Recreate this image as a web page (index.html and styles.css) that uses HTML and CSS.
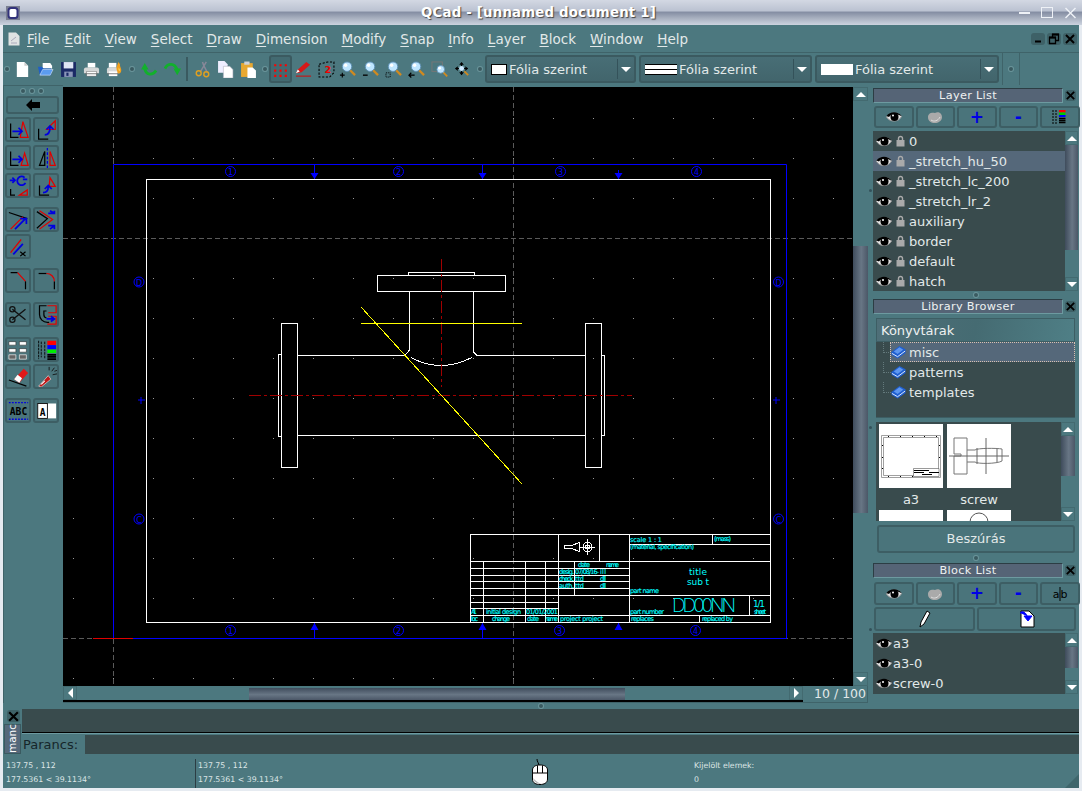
FILE: index.html
```html
<!DOCTYPE html>
<html lang="en">
<head>
<meta charset="utf-8">
<title>QCad</title>
<link rel="stylesheet" href="styles.css">
</head>
<body>
<svg class="defs" width="0" height="0">
  <symbol id="eye" viewBox="0 0 16 12">
    <path d="M0.500 6C3 1.500 12 0 15.500 5.500C13 11 4 12 0.500 6Z" fill="#e4e4e4" stroke="#999"/>
    <path d="M0.500 5C4 0 12 0 15.500 5L13 4C9 2 5 3 3 6Z" fill="#000"/>
    <circle cx="8.500" cy="6" r="4" fill="#000"/>
    <circle cx="7" cy="4.500" r="1" fill="#fff"/>
  </symbol>
  <symbol id="eyegray" viewBox="0 0 16 12">
    <path d="M1 6C1 2 5 1 8 2C11 0 15 2 15 6C15 10 11 12 8 12C4 12 1 10 1 6Z" fill="#aaa"/>
    <path d="M4 9C7 11 11 10 13 6" stroke="#ddd" fill="none"/>
  </symbol>
  <symbol id="lock" viewBox="0 0 9 12">
    <path d="M2.500 6V3.500a2 2 0 0 1 4 0V6" fill="none" stroke="#aaa" stroke-width="1.400"/>
    <rect x="0.500" y="5" width="8" height="6.500" fill="#aaa"/>
  </symbol>
  <symbol id="book" viewBox="0 0 16 14">
    <path d="M0.500 7L9 0.500L15.500 4V8L7 14L0.500 10Z" fill="#1f5fd0"/>
    <path d="M3 6.500L9 2L13 4.500L7 9Z" fill="#5f97ee"/>
    <path d="M1 8.500L7 12L15 6" stroke="#fff" fill="none" stroke-width="0.900"/>
  </symbol>
  <symbol id="lens" viewBox="0 0 16 16">
    <path d="M9 9L15 15" stroke="#d08a20" stroke-width="2.400"/>
    <circle cx="6.500" cy="6" r="5" fill="#bfe6ff" stroke="#5d8fb5"/>
    <circle cx="5" cy="4.500" r="1.800" fill="#fff"/>
  </symbol>
  <symbol id="scissors" viewBox="0 0 24 24">
    <path d="M5 6L20 18M5 18L20 6" stroke="#111" stroke-width="1.600"/>
    <circle cx="5" cy="6" r="3" fill="none" stroke="#111" stroke-width="1.400"/>
    <circle cx="5" cy="18" r="3" fill="none" stroke="#111" stroke-width="1.400"/>
  </symbol>
</svg>

<div class="app">
  <header class="titlebar">
    <svg class="app-icon" viewBox="0 0 14 14">
      <rect x="0" y="0" width="14" height="14" fill="#7a7f92"/>
      <rect x="2.500" y="2" width="9" height="10" rx="2.500" fill="#fff" stroke="#32327a" stroke-width="2"/>
    </svg>
    <span class="title-text">QCad - [unnamed document 1]</span>
    <div class="wm-buttons">
      <span class="wm wm-min"></span>
      <span class="wm wm-max"></span>
      <svg class="wm-close" viewBox="0 0 12 12"><path d="M1 1L11 11M11 1L1 11" stroke="#eef1f6" stroke-width="1.500"/></svg>
    </div>
  </header>

  <div class="frame">
    <nav class="menubar">
      <svg class="doc-icon" viewBox="0 0 12 14">
        <path d="M0.500 0.500H8L11.500 4V13.500H0.500Z" fill="#dfe3e3"/>
        <path d="M3 9L8 5M3 11H9" stroke="#aab" fill="none"/>
      </svg>
      <a class="menu menu-first"><u>F</u>ile</a>
      <a class="menu"><u>E</u>dit</a>
      <a class="menu"><u>V</u>iew</a>
      <a class="menu"><u>S</u>elect</a>
      <a class="menu"><u>D</u>raw</a>
      <a class="menu"><u>D</u>imension</a>
      <a class="menu"><u>M</u>odify</a>
      <a class="menu"><u>S</u>nap</a>
      <a class="menu"><u>I</u>nfo</a>
      <a class="menu"><u>L</u>ayer</a>
      <a class="menu"><u>B</u>lock</a>
      <a class="menu"><u>W</u>indow</a>
      <a class="menu"><u>H</u>elp</a>
      <div class="mdi-buttons">
        <span class="mdi"><svg viewBox="0 0 12 12"><path d="M3 8.500H9" stroke="#000" stroke-width="2"/></svg></span>
        <span class="mdi"><svg viewBox="0 0 12 12"><path d="M1.500 4.500H7.500V10.500H1.500ZM4.500 4.500V1.500H10.500V7.500H7.500" fill="none" stroke="#000" stroke-width="1.300"/><path d="M1 4.500H8M4 1.500H11" stroke="#000" stroke-width="2"/></svg></span>
        <span class="mdi"><svg viewBox="0 0 12 12"><path d="M2 2L10 10M10 2L2 10" stroke="#000" stroke-width="2"/></svg></span>
      </div>
    </nav>

    <div class="toolbar">
      <div class="handle handle-first"></div>
      <div class="tgroup">
        <span class="tbtn"><svg viewBox="0 0 16 18"><path d="M2 1H10L14 5V17H2Z" fill="#fff"/><path d="M10 1V5H14" fill="#ccc"/></svg></span>
        <span class="tbtn"><svg viewBox="0 0 18 18"><path d="M6 2H14L16 5V8H6Z" fill="#fff"/><path d="M1 6H5L7 8H15V15H3Z" fill="#1f5fc8"/><path d="M3 15L6 9H17L14 15Z" fill="#5b9cf0" stroke="#fff" stroke-width="0.500"/></svg></span>
        <span class="tbtn"><svg viewBox="0 0 16 16"><rect x="1" y="1" width="14" height="14" fill="#1b2a66"/><rect x="3.500" y="1" width="9" height="6" fill="#dfe6f5"/><rect x="4" y="10" width="8" height="5" fill="#8a96b8"/><rect x="6" y="11" width="2" height="3" fill="#1b2a66"/></svg></span>
        <span class="tbtn"><svg viewBox="0 0 18 16"><rect x="5" y="1" width="8" height="5" fill="#fff"/><path d="M1 8a2 2 0 0 1 2-2H15a2 2 0 0 1 2 2V12H1Z" fill="#d6d8d8"/><rect x="4" y="10" width="10" height="5" fill="#fff" stroke="#666" stroke-width="0.500"/><rect x="2" y="12" width="14" height="1" fill="#777"/></svg></span>
        <span class="tbtn"><svg viewBox="0 0 18 16"><rect x="3" y="1" width="8" height="5" fill="#fff"/><path d="M1 8a2 2 0 0 1 2-2H13V12H1Z" fill="#d6d8d8"/><rect x="3" y="10" width="9" height="5" fill="#fff"/><rect x="1" y="12" width="12" height="1" fill="#777"/><path d="M13 0C12 4 10 6 12 10C12 13 15 13 16 10C17 7 14 5 15 2C14 2 14 1 13 0Z" fill="#f0a020"/><path d="M13.500 6C13 8 13.500 10 14.500 9.500C15 8 14 7 13.500 6Z" fill="#ffe060"/></svg></span>
      </div>
      <div class="handle"></div>
      <div class="tgroup">
        <span class="tbtn"><svg viewBox="0 0 18 16"><path d="M4 7C5 14 12 15 16 9" fill="none" stroke="#12b02c" stroke-width="3"/><path d="M0 8L4 1L8 8Z" fill="#12b02c"/></svg></span>
        <span class="tbtn"><svg viewBox="0 0 18 16"><path d="M1 7C4 1 11 1 14 8" fill="none" stroke="#12b02c" stroke-width="3"/><path d="M10 7H18L14 14Z" fill="#12b02c"/></svg></span>
      </div>
      <div class="tsep"></div>
      <div class="tgroup">
        <span class="tbtn"><svg viewBox="0 0 16 18"><path d="M12 1L6 11M8 1L9 4L13 12" stroke="#889" stroke-width="1.600" fill="none"/><circle cx="4" cy="13" r="2.600" fill="none" stroke="#e0a020" stroke-width="1.500"/><circle cx="12" cy="14" r="2.600" fill="none" stroke="#e0a020" stroke-width="1.500"/></svg></span>
        <span class="tbtn"><svg viewBox="0 0 16 16"><path d="M1 0H7L10 3V11H1Z" fill="#eef"/><path d="M6 5H12L15 8V16H6Z" fill="#fff" stroke="#aab" stroke-width="0.500"/></svg></span>
        <span class="tbtn"><svg viewBox="0 0 16 16"><rect x="1" y="2" width="11" height="13" fill="#e8a830"/><rect x="4" y="0.500" width="5" height="3" fill="#cfd2d8"/><path d="M7 6H12L15 9V16H7Z" fill="#fff"/></svg></span>
      </div>
      <div class="handle handle-sm"></div>
      <div class="tgroup">
        <span class="tbtn tbtn-on"><svg viewBox="0 0 16 16"><path d="M2 3h2v2H2zM7 3h2v2H7zM12 3h2v2h-2zM2 8h2v2H2zM7 8h2v2H7zM12 8h2v2h-2zM2 13h2v2H2zM7 13h2v2H7zM12 13h2v2h-2z" fill="#f00"/></svg></span>
        <span class="tbtn"><svg viewBox="0 0 18 16"><path d="M1 12L3 8L12 0L16 3L7 11Z" fill="#d81818"/><path d="M1 12L3 8L5 10Z" fill="#fff"/><path d="M1 15H17" stroke="#d00" stroke-width="1"/></svg></span>
        <span class="tbtn"><svg viewBox="0 0 16 16"><path d="M1 3L9 1H15V11L11 15H1Z" fill="none" stroke="#000" stroke-dasharray="2 1.500"/><text class="ref-num" x="6" y="11">2</text></svg></span>
        <span class="tbtn tbtn-tight"><svg viewBox="0 0 18 18"><use href="#lens" x="2" y="0" width="16" height="16"/><path d="M1 15H6M3.500 12.500V17.500" stroke="#000" stroke-width="1.200"/></svg></span>
        <span class="tbtn"><svg viewBox="0 0 18 18"><use href="#lens" x="2" y="0" width="16" height="16"/><path d="M1 15H6" stroke="#000" stroke-width="1.400"/></svg></span>
        <span class="tbtn"><svg viewBox="0 0 18 18"><use href="#lens" x="2" y="0" width="16" height="16"/><rect x="1" y="12.500" width="4.500" height="4.500" fill="none" stroke="#000" stroke-dasharray="1 1"/></svg></span>
        <span class="tbtn"><svg viewBox="0 0 18 18"><use href="#lens" x="2" y="0" width="16" height="16"/><path d="M7 15H1M3.500 12.500L1 15L3.500 17.500" fill="none" stroke="#000" stroke-width="1.300"/></svg></span>
        <span class="tbtn"><svg viewBox="0 0 18 18"><rect x="1" y="1" width="11" height="10" fill="none" stroke="#777"/><use href="#lens" x="5" y="4" width="13" height="13"/></svg></span>
        <span class="tbtn"><svg viewBox="0 0 18 18"><path d="M8 1L5.500 4H10.500ZM8 15L5.500 12H10.500ZM1 8L4 5.500V10.500ZM15 8L12 5.500V10.500Z" fill="#000"/><path d="M8 2V14M2 8H14" stroke="#000" stroke-width="1.200"/><circle cx="8" cy="8" r="2.600" fill="#cfeaff"/><path d="M11 11L15 15" stroke="#d08a20" stroke-width="2"/></svg></span>
      </div>
      <div class="handle handle-combo"></div>
      <div class="combo combo-a">
        <span class="swatch swatch-box"></span><span class="combo-text">Fólia szerint</span>
        <span class="combo-arrow"></span>
      </div>
      <div class="combo combo-b">
        <span class="swatch swatch-line"></span><span class="combo-text">Fólia szerint</span>
        <span class="combo-arrow"></span>
      </div>
      <div class="combo combo-c">
        <span class="swatch swatch-plain"></span><span class="combo-text">Fólia szerint</span>
        <span class="combo-arrow"></span>
      </div>
      <div class="tool-end"><div class="handle"></div></div>
    </div>

    <div class="main">
      <aside class="sidetools">
        <div class="grip-row"><i class="dot"></i><i class="dot"></i><i class="dot"></i></div>
        <span class="sbtn sbtn-wide"><svg class="back" viewBox="0 0 14 12"><path d="M0 6L6 0V3H14V9H6V12Z" fill="#000"/></svg></span>
        <div class="sgrid">
          <span class="sbtn"><svg viewBox="0 0 24 24"><path d="M3 5V21H12" class="ik"/><path d="M17 3L23 21H14Z" class="ir"/><path d="M5 14H15M12 10L16 14L12 18" class="ib"/></svg></span>
          <span class="sbtn"><svg viewBox="0 0 24 24"><path d="M3 11V23H14" class="ik"/><path d="M22 2V12H12Z" class="ir"/><path d="M10 18C14 18 16 15 16 9M12 12L16 8L20 12" class="ib"/></svg></span>
          <span class="sbtn"><svg viewBox="0 0 24 24"><path d="M3 5V21H12" class="ik"/><path d="M19 7L23 21H15Z" class="ir"/><path d="M5 14H15M12 10L16 14L12 18" class="ib"/></svg></span>
          <span class="sbtn"><svg viewBox="0 0 24 24"><path d="M10 5L4 21H10Z" class="ik"/><path d="M16 5L22 21H16Z" class="ir"/><path d="M13 1V24" class="ib ib-dash"/></svg></span>
          <span class="sbtn"><svg viewBox="0 0 24 24"><path d="M2 6H8M5 3L8 6L5 9" class="ib"/><path d="M19 3A5 5 0 1 0 20 9M22 5H17" class="ib"/><path d="M3 16V23H8" class="ik"/><path d="M22 17V23H13Z" class="ir"/></svg></span>
          <span class="sbtn"><svg viewBox="0 0 24 24"><path d="M4 12V23H15" class="ik"/><path d="M16 3L22 13H15Z" class="ir"/><path d="M8 20C13 20 14 17 14 13M10 16L14 12L18 16" class="ib"/></svg></span>
        </div>
        <div class="sgrid sgrid-gap">
          <span class="sbtn"><svg viewBox="0 0 24 24"><path d="M1 4L22 11" class="ik"/><path d="M3 23L17 9" class="ir"/><path d="M8 23L20 11M14 11H21V17" class="ib"/></svg></span>
          <span class="sbtn"><svg viewBox="0 0 24 24"><path d="M1 3L13 11L1 22" class="ik"/><path d="M4 2L19 12L4 23" class="ir"/><path d="M14 5H21V2M21 5L16 2M14 19H21V23M21 19L16 23" class="ib"/></svg></span>
          <span class="sbtn"><svg viewBox="0 0 24 24"><path d="M3 19L15 4" class="ir"/><path d="M6 21L17 9" class="ib"/><path d="M14 18L20 23M20 18L14 23" class="ik"/></svg></span>
        </div>
        <div class="sgrid sgrid-gap">
          <span class="sbtn"><svg viewBox="0 0 24 24"><path d="M3 3H11" class="ik"/><path d="M11 3L20 13" class="ir"/><path d="M20 13V22" class="ik"/></svg></span>
          <span class="sbtn"><svg viewBox="0 0 24 24"><path d="M3 4H12" class="ik"/><path d="M12 4A9 9 0 0 1 21 13" class="ir"/><path d="M21 13V22" class="ik"/></svg></span>
        </div>
        <div class="sgrid sgrid-gap">
          <span class="sbtn"><svg viewBox="0 0 24 24"><use href="#scissors" width="24" height="24"/></svg></span>
          <span class="sbtn"><svg viewBox="0 0 24 24"><path d="M12 2H4V12A9 9 0 0 0 13 21H15" class="ik"/><path d="M12 8H9V12A4 4 0 0 0 12 16" class="ik"/><path d="M13 2H23V10H14M14 14H23V23H13" class="ir"/><path d="M12 17H20M17 14L21 17L17 20" class="ib"/></svg></span>
        </div>
        <div class="sgrid sgrid-gap sgrid-gap-b">
          <span class="sbtn"><svg viewBox="0 0 24 24"><path d="M1 3h8v4H1zM13 3h8v4h-8zM1 11h8v4H1zM13 11h8v4h-8z" fill="#fff" stroke="#222" stroke-width="0.600"/><path d="M1 18h8v5H1zM13 18h8v5h-8z" fill="#666" stroke="#eee" stroke-width="0.800"/></svg></span>
          <span class="sbtn"><svg viewBox="0 0 24 24"><path d="M3 2V23M6 3V21M10 3V22" class="ik ik-dash"/><rect x="13" y="2" width="10" height="5" fill="#f00"/><rect x="13" y="7" width="10" height="5" fill="#00f"/><rect x="13" y="12" width="10" height="4" fill="#0e0"/><path d="M13 18H23M13 20.500H23M13 23H23" stroke="#000" stroke-width="2"/></svg></span>
          <span class="sbtn"><svg viewBox="0 0 24 24"><path d="M1 16L21 23" class="ik"/><path d="M7 15L18 3L23 8L13 19Z" fill="#e01818"/><path d="M7 15L11 10L16 14L13 19Z" fill="#fff"/></svg></span>
          <span class="sbtn"><svg viewBox="0 0 24 24"><path d="M3 23L14 11L17 15L6 24Z" fill="#c01818" stroke="#fff" stroke-width="0.600"/><path d="M10 17L6 21" stroke="#fff" stroke-width="1.200"/><path d="M18 6L21 2M19 10L24 9M15 5L15 1M21 6L24 5" stroke="#111"/></svg></span>
        </div>
        <div class="sgrid sgrid-gap">
          <span class="sbtn"><svg viewBox="0 0 24 24"><path d="M1 3H23M1 22H23" class="ib ib-thin"/><text class="abc" x="12" y="17.500">ABC</text></svg></span>
          <span class="sbtn"><svg viewBox="0 0 24 24"><rect x="2" y="4" width="21" height="17" fill="#fff"/><rect x="2" y="4" width="11" height="17" fill="#fff" stroke="#000"/><text class="abc" x="7.500" y="18">A</text></svg></span>
        </div>
      </aside>

      <section class="center">
        <div class="canvas-row">
          <svg class="canvas" viewBox="63 87 790 599" width="790" height="599">
            <defs>
              <pattern id="griddots" x="73" y="118" width="40" height="40" patternUnits="userSpaceOnUse">
                <rect width="1" height="1" class="griddot"/>
              </pattern>
            </defs>
            <rect x="63" y="87" width="790" height="599" class="bg-black"/>
            <rect x="63" y="87" width="790" height="599" fill="url(#griddots)"/>
            <path class="meta" d="M113.500 87V686M513.500 87V686M63 238.500H853M63 638.500H853"/>
            <g class="blue">
              <path d="M113.500 164.500H786.500V638.500H113.500Z"/>
              <path d="M314.500 164V179M482.500 164V179M314.500 622V638M482.500 622V638M618.500 170V179M618.500 622V630"/>
              <path class="blue-fill" d="M310.500 173H318.500L314.500 179ZM478.500 173H486.500L482.500 179ZM614.500 173H622.500L618.500 179ZM310.500 630H318.500L314.500 623ZM478.500 630H486.500L482.500 623ZM614.500 630H622.500L618.500 623Z"/>
              <path d="M138 400H145M773 400H780M141 397V404M776 397V404"/>
              <circle cx="230.500" cy="171.500" r="5"/><circle cx="398.500" cy="171.500" r="5"/><circle cx="560.500" cy="171.500" r="5"/><circle cx="696.500" cy="171.500" r="5"/>
              <circle cx="230.500" cy="630.500" r="5"/><circle cx="398.500" cy="630.500" r="5"/><circle cx="559.500" cy="630.500" r="5"/><circle cx="695.500" cy="630.500" r="5"/>
              <circle cx="139" cy="282" r="5"/><circle cx="139" cy="519" r="5"/><circle cx="778.500" cy="282" r="5"/><circle cx="778.500" cy="519" r="5"/>
            </g>
            <path class="red-zero" d="M93 638.500H133"/>
            <g class="blue-num">
              <text x="230.500" y="175">1</text><text x="398.500" y="175">2</text><text x="560.500" y="175">3</text><text x="696.500" y="175">4</text>
              <text x="230.500" y="634">1</text><text x="398.500" y="634">2</text><text x="559.500" y="634">3</text><text x="695.500" y="634">4</text>
              <text x="139" y="286">D</text><text x="139" y="523">C</text><text x="778.500" y="286">D</text><text x="778.500" y="523">C</text>
            </g>
            <g class="white">
              <rect x="146.500" y="179.500" width="624" height="443"/>
              <path d="M281.500 323.500H297.500V467.500H281.500ZM585.500 323.500H601.500V467.500H585.500Z"/>
              <path d="M298 355.500H405M298 435.500H585M477 355.500H585M281 354.500H278.500V436.500H281M602 355.500H604.500V435.500H602"/>
              <path d="M377.500 275.500H505.500V291.500H377.500Z"/>
              <path d="M408 275V273L409.500 272.500H474L474.500 275M409.500 292V350L405 355.500M473.500 292V352L477 355.500"/>
              <path d="M411 357.500C420 362 428 365.500 441 365.500C454 365.500 462 362 472 357.500"/>
            </g>
            <path class="red" d="M441.500 259V387"/>
            <path class="red" d="M249 395.500H632"/>
            <path class="yellow" d="M361 323.500H522"/>
            <path class="yellow" d="M361 307L522 484"/>
            <g class="white">
              <path d="M470.500 534.500H770.500V622.500H470.500Z"/>
              <path d="M558.500 534.500V622M599.500 534.500V561M629.500 534.500V622M470.500 561.500H770.500M629.500 544.500H770.500M712.500 534.500V544"/>
              <path d="M470.500 568.500H629M470.500 575.500H629M470.500 581.500H629M470.500 588.500H629M470.500 595.500H770.500M470.500 602.500H558M470.500 608.500H558M470.500 615.500H770.500"/>
              <path d="M483.500 561.500V622M525.500 561.500V622M545.500 561.500V622M574.500 561.500V595M749.500 595V615M699.500 615V622"/>
              <path d="M564 545.500H572L579 542.500V551.500L572 548.500H564Z M579 547H595M587 539V555"/>
              <circle cx="587.500" cy="547" r="4.500"/><circle cx="587.500" cy="547" r="2"/>
            </g>
            <g class="cyan">
              <text x="630" y="542" textLength="32">scale  1 : 1</text>
              <text x="714" y="541" textLength="17">(mass)</text>
              <text x="630" y="549" textLength="64">(material, specification)</text>
              <text x="578" y="567" textLength="12">date</text>
              <text x="606" y="567" textLength="13">name</text>
              <text x="559" y="574" textLength="15">desig.</text>
              <text x="575" y="574" textLength="24">07/08/16-</text>
              <text x="600" y="574" textLength="6">ill</text>
              <text x="559" y="581" textLength="15">check.</text>
              <text x="575" y="581" textLength="9">ttd</text>
              <text x="600" y="581" textLength="6">dll</text>
              <text x="559" y="588" textLength="15">auth.</text>
              <text x="575" y="588" textLength="9">ttd</text>
              <text x="600" y="588" textLength="6">dll</text>
              <text x="689" y="575" class="cy-big" textLength="18">title</text>
              <text x="687" y="585" class="cy-big" textLength="22">sub t</text>
              <text x="630" y="593" textLength="29">part name</text>
              <text x="672" y="612" class="cy-huge" textLength="64">DD00NN</text>
              <text x="753" y="607" class="cy-big" textLength="12">1/1</text>
              <text x="754" y="614" textLength="12">sheet</text>
              <text x="630" y="614" textLength="34">part number</text>
              <text x="471" y="614" textLength="6">A1</text>
              <text x="486" y="614" textLength="35">initial design</text>
              <text x="526" y="614" textLength="32">01/01/2001</text>
              <text x="471" y="621" textLength="7">loc</text>
              <text x="492" y="621" textLength="18">change</text>
              <text x="527" y="621" textLength="12">date</text>
              <text x="545" y="621" textLength="13">name</text>
              <text x="560" y="621" textLength="43">project  project</text>
              <text x="631" y="621" textLength="23">replaces</text>
              <text x="702" y="621" textLength="31">replaced by</text>
            </g>
          </svg>
          <div class="vscroll vscroll-main">
            <span class="sb-btn"><i class="arr-up"></i></span>
            <span class="sb-space sb-s145"></span>
            <span class="sb-thumb sb-t267"></span>
            <span class="sb-space sb-fill"></span>
            <span class="sb-btn"><i class="arr-down"></i></span>
          </div>
        </div>
        <div class="hscroll-row">
          <div class="hscroll">
            <span class="hb-btn"><i class="arr-left"></i></span>
            <span class="hb-space"></span>
            <span class="hb-thumb"></span>
            <span class="hb-fill"></span>
            <span class="hb-btn hb-btn-r"><i class="arr-right"></i></span>
          </div>
          <div class="zoombox">10 / 100</div>
        </div>
      </section>

      <div class="gutter"><i class="dot dot-s"></i><i class="dot dot-s gut-b"></i><i class="dot dot-s gut-c"></i></div>

      <aside class="dock">
        <div class="dock-title"><span class="dt-text">Layer List</span><span class="dt-close"><svg viewBox="0 0 12 12"><path d="M2 2L10 10M10 2L2 10" stroke="#000" stroke-width="2"/></svg></span></div>
        <div class="btn-row">
          <span class="dbtn"><svg class="ic16" viewBox="0 0 16 12"><use href="#eye"/></svg></span>
          <span class="dbtn"><svg class="ic16" viewBox="0 0 16 12"><use href="#eyegray"/></svg></span>
          <span class="dbtn dbtn-plus">+</span>
          <span class="dbtn dbtn-plus">-</span>
          <span class="dbtn"><svg class="ic16" viewBox="0 0 16 14"><path d="M1 0V14M4 0V14" stroke="#000" stroke-dasharray="2 1"/><rect x="7" y="0" width="6.500" height="2.500" fill="#f00"/><rect x="7" y="2.500" width="6.500" height="2.500" fill="#0c0"/><rect x="7" y="5" width="6.500" height="2" fill="#00f"/><path d="M7 8.500H13.500M7 10.500H13.500M7 12.500H13.500" stroke="#000" stroke-width="1.300"/></svg></span>
        </div>
        <div class="listbox listbox-layer">
          <ul class="rows">
            <li class="row"><svg class="eye"><use href="#eye"/></svg><svg class="lock"><use href="#lock"/></svg><span>0</span></li>
            <li class="row row-sel"><svg class="eye"><use href="#eye"/></svg><svg class="lock"><use href="#lock"/></svg><span>_stretch_hu_50</span></li>
            <li class="row"><svg class="eye"><use href="#eye"/></svg><svg class="lock"><use href="#lock"/></svg><span>_stretch_lc_200</span></li>
            <li class="row"><svg class="eye"><use href="#eye"/></svg><svg class="lock"><use href="#lock"/></svg><span>_stretch_lr_2</span></li>
            <li class="row"><svg class="eye"><use href="#eye"/></svg><svg class="lock"><use href="#lock"/></svg><span>auxiliary</span></li>
            <li class="row"><svg class="eye"><use href="#eye"/></svg><svg class="lock"><use href="#lock"/></svg><span>border</span></li>
            <li class="row"><svg class="eye"><use href="#eye"/></svg><svg class="lock"><use href="#lock"/></svg><span>default</span></li>
            <li class="row"><svg class="eye"><use href="#eye"/></svg><svg class="lock"><use href="#lock"/></svg><span>hatch</span></li>
          </ul>
          <div class="vscroll">
            <span class="sb-btn"><i class="arr-up"></i></span>
            <span class="sb-thumb sb-t105"></span>
            <span class="sb-space sb-fill"></span>
            <span class="sb-btn"><i class="arr-down"></i></span>
          </div>
        </div>
        <div class="dock-gap"><i class="dot"></i></div>

        <div class="dock-title"><span class="dt-text">Library Browser</span><span class="dt-close"><svg viewBox="0 0 12 12"><path d="M2 2L10 10M10 2L2 10" stroke="#000" stroke-width="2"/></svg></span></div>
        <div class="tree">
          <div class="tree-head">Könyvtárak</div>
          <ul class="tree-body">
            <li class="tree-row tree-sel"><svg class="book"><use href="#book"/></svg><span>misc</span></li>
            <li class="tree-row"><svg class="book"><use href="#book"/></svg><span>patterns</span></li>
            <li class="tree-row"><svg class="book"><use href="#book"/></svg><span>templates</span></li>
          </ul>
        </div>
        <div class="preview">
          <div class="thumbs">
            <figure class="thumb">
              <svg viewBox="0 0 64 64" class="thumb-img">
                <path d="M2.500 11.500H61.500V53.500H2.500ZM4.500 13.500H59.500V51.500H4.500Z" fill="none" stroke="#888" stroke-width="0.800"/>
                <path d="M9 12.500h1M21 12.500h1M33 12.500h1M45 12.500h1M57 12.500h1M9 52.500h1M21 52.500h1M33 52.500h1M3 21.500h1M3 33.500h1M3 44.500h1M60 21.500h1M60 33.500h1" stroke="#000"/>
                <path d="M34.500 44.500H60V52.500H34.500Z" fill="#fff" stroke="#555" stroke-width="0.600"/>
                <path d="M35 46.500H50M35 48.500H45M50 48.500H60M43 50.500H53" stroke="#000" stroke-width="1.200"/>
              </svg>
              <figcaption>a3</figcaption>
            </figure>
            <figure class="thumb">
              <svg viewBox="0 0 64 64" class="thumb-img">
                <path d="M7 14H20V50H7V32H14V30H7Z M20 26H28C30 24 50 24 55 25V37C50 40 30 40 28 38H20" fill="none" stroke="#777"/>
                <path d="M2 32H62M39 14V50M30 24V40M50 25V38" stroke="#666" fill="none"/>
              </svg>
              <figcaption>screw</figcaption>
            </figure>
            <div class="thumb-cut"></div>
            <div class="thumb-cut"><svg viewBox="0 0 64 11"><circle cx="32" cy="12" r="9" fill="none" stroke="#555"/></svg></div>
          </div>
          <div class="vscroll">
            <span class="sb-btn"><i class="arr-up"></i></span>
            <span class="sb-thumb sb-t39"></span>
            <span class="sb-space sb-fill"></span>
            <span class="sb-btn"><i class="arr-down"></i></span>
          </div>
        </div>
        <div class="insert">Beszúrás</div>
        <div class="dock-gap dock-gap-b"><i class="dot"></i></div>

        <div class="dock-title"><span class="dt-text">Block List</span><span class="dt-close"><svg viewBox="0 0 12 12"><path d="M2 2L10 10M10 2L2 10" stroke="#000" stroke-width="2"/></svg></span></div>
        <div class="btn-row btn-row-block">
          <span class="dbtn"><svg class="ic16" viewBox="0 0 16 12"><use href="#eye"/></svg></span>
          <span class="dbtn"><svg class="ic16" viewBox="0 0 16 12"><use href="#eyegray"/></svg></span>
          <span class="dbtn dbtn-plus">+</span>
          <span class="dbtn dbtn-plus">-</span>
          <span class="dbtn"><svg class="ic16" viewBox="0 0 16 14"><path d="M8 0V14" stroke="#000"/><text class="ab" x="4" y="11">a</text><text class="ab" x="12" y="11">b</text></svg></span>
        </div>
        <div class="btn-row btn-row-two">
          <span class="dbtn"><svg class="ic18" viewBox="0 0 12 18"><path d="M8 1L11 3L5 14L1 17L2 12Z" fill="#fff" stroke="#000"/></svg></span>
          <span class="dbtn"><svg class="ic18" viewBox="0 0 16 18"><path d="M2 1H10L15 6V17H2Z" fill="#fff" stroke="#000"/><path d="M1 3C4 0 7 3 8 6M5 6H13L9 11Z" stroke="#00f" fill="#00f" stroke-width="1"/></svg></span>
        </div>
        <div class="listbox listbox-block">
          <ul class="rows">
            <li class="row row-b"><svg class="eye"><use href="#eye"/></svg><span>a3</span></li>
            <li class="row row-b"><svg class="eye"><use href="#eye"/></svg><span>a3-0</span></li>
            <li class="row row-b"><svg class="eye"><use href="#eye"/></svg><span>screw-0</span></li>
          </ul>
          <div class="vscroll">
            <span class="sb-btn"><i class="arr-up"></i></span>
            <span class="sb-thumb sb-t21"></span>
            <span class="sb-space sb-fill"></span>
            <span class="sb-btn"><i class="arr-down"></i></span>
          </div>
        </div>
      </aside>
    </div>

    <div class="split-row"><i class="dot"></i></div>

    <div class="command">
      <div class="cmd-side">
        <span class="cmd-close"><svg viewBox="0 0 12 12"><path d="M2 2L10 10M10 2L2 10" stroke="#000" stroke-width="2"/></svg></span>
        <span class="cmd-tab"><span>manc</span></span>
      </div>
      <div class="cmd-main">
        <div class="cmd-output"></div>
        <div class="cmd-input"><label class="cmd-label">Parancs:</label><div class="cmd-field"></div></div>
      </div>
    </div>

    <footer class="status">
      <div class="st-coord"><div>137.75 , 112</div><div>177.5361 &lt; 39.1134°</div></div>
      <div class="st-coord st-coord-2"><div>137.75 , 112</div><div>177.5361 &lt; 39.1134°</div></div>
      <div class="st-mouse">
        <svg viewBox="0 0 16 27" width="16" height="27">
          <path d="M7 8C7 5 5 4 5 1" fill="none" stroke="#000"/>
          <path d="M0.500 12C0.500 9 3 7 8 7C13 7 15.500 9 15.500 12V21C15.500 25 12 26.500 8 26.500C4 26.500 0.500 25 0.500 21Z" fill="#fff" stroke="#000"/>
          <path d="M0.500 15H15.500M5.500 7.500V15M10.500 7.500V15" stroke="#000"/>
          <path d="M1 20C2 24 5 26 9 26C5 24 3 22 1 20Z" fill="#bbb"/>
        </svg>
      </div>
      <div class="st-sel"><div>Kijelölt elemek:</div><div>0</div></div>
      <svg class="grip" viewBox="0 0 14 14"><path d="M14 0V14H0Z" fill="#3f666c"/></svg>
    </footer>
  </div>
</div>
</body>
</html>
```

FILE: styles.css
```css
* { box-sizing: border-box; }
html, body { margin: 0; padding: 0; }
body {
  width: 1082px;
  height: 791px;
  overflow: hidden;
  background: #e6ebf1;
  font-family: "DejaVu Sans", sans-serif;
  font-size: 13px;
  color: #e2e9e9;
}
ul { list-style: none; margin: 0; padding: 0; }
figure { margin: 0; }
svg { display: block; }
.defs { position: absolute; }
.app { display: flex; flex-direction: column; height: 791px; }

/* window title */
.titlebar {
  height: 25px;
  flex: none;
  display: flex;
  align-items: center;
  padding: 0 5px 0 6px;
  background: linear-gradient(#d3d8e3 0, #bcc3d2 42%, #868fa4 50%, #a4acbc 70%, #ccd3df 100%);
}
.app-icon { width: 14px; height: 14px; flex: none; }
.title-text {
  flex: 1;
  text-align: center;
  font-weight: bold;
  font-size: 13.300px;
  letter-spacing: 0.200px;
  color: #fff;
  text-shadow: 1px 1px 1px #444;
  padding-left: 38px;
}
.wm-buttons { display: flex; align-items: center; gap: 11px; flex: none; }
.wm { display: block; }
.wm-min { width: 11px; height: 2px; background: #eef1f6; }
.wm-max { width: 12px; height: 11px; border: 1px solid #eef1f6; }
.wm-close { width: 13px; height: 12px; }

.frame {
  width: 1076px;
  height: 763px;
  margin-left: 3px;
  background: #4c787f;
  display: flex;
  flex-direction: column;
  flex: none;
}

/* menu */
.menubar {
  height: 28px;
  flex: none;
  display: flex;
  align-items: center;
  padding-left: 5px;
  border-bottom: 1px solid #3f6369;
  font-size: 13.500px;
}
.doc-icon { width: 12px; height: 14px; margin-right: 7px; flex: none; }
.menu { margin-right: 14px; color: #e2e9e9; }
.menu-first { margin-right: 15px; }
.menu u { text-decoration-thickness: 1px; text-underline-offset: 2px; }
.mdi-buttons { margin-left: auto; display: flex; gap: 2px; padding-right: 2px; }
.mdi {
  width: 14px;
  height: 12px;
  display: flex;
  align-items: center;
  justify-content: center;
  background: #3e6167;
  border-radius: 3px;
}
.mdi svg { width: 12px; height: 12px; }

/* toolbar */
.toolbar {
  height: 32px;
  flex: none;
  display: flex;
  align-items: center;
}
.tgroup { display: flex; align-items: center; }
.handle {
  width: 12px;
  flex: none;
  display: flex;
  justify-content: center;
}
.handle::before {
  content: "";
  width: 4px;
  height: 4px;
  border-radius: 50%;
  background: #3a5a60;
  box-shadow: 0 0 0 1px #6a949a;
}
.handle-first { width: 8px; }
.handle-sm { width: 9px; }
.handle-combo { width: 11px; }
.tsep { width: 7px; height: 24px; flex: none; background: linear-gradient(#3a5a60, #3a5a60) 2px 0 / 2px 100% no-repeat; }
.tbtn {
  width: 23px;
  height: 28px;
  flex: none;
  display: flex;
  align-items: center;
  justify-content: center;
}
.tbtn-tight { margin-left: -2px; }
.tbtn svg { width: 17px; height: 17px; }
.tbtn-on { background: #436a71; border: 2px solid #3b5a60; border-radius: 3px; }
.ref-num { font: bold 9px "DejaVu Sans", sans-serif; fill: #e00; text-anchor: start; }
.combo {
  height: 28px;
  flex: none;
  display: flex;
  align-items: center;
  padding-left: 4px;
  background: linear-gradient(#486e76, #42656c);
  border: 2px solid #3b5a60;
  border-radius: 3px;
  margin-right: 3px;
}
.combo-a { width: 151px; }
.combo-b { width: 173px; }
.combo-c { width: 184px; }
.swatch { flex: none; display: block; background: #fff; }
.swatch-box { width: 16px; height: 11px; border: 1px solid #000; margin-right: 2px; }
.swatch-line { width: 32px; height: 11px; border-top: 1px solid #000; border-bottom: 1px solid #000; margin-right: 2px; background: linear-gradient(#fff 40%, #000 40%, #000 60%, #fff 60%); }
.swatch-plain { width: 32px; height: 11px; margin-right: 2px; }
.combo-text { flex: 1; font-size: 13px; white-space: nowrap; }
.combo-arrow {
  flex: none;
  width: 17px;
  height: 20px;
  border-left: 1px solid #34525a;
  display: flex;
  align-items: center;
  justify-content: center;
}
.combo-arrow::after {
  content: "";
  border-left: 5px solid transparent;
  border-right: 5px solid transparent;
  border-top: 5px solid #fff;
}
.tool-end {
  width: 18px;
  height: 32px;
  flex: none;
  border-left: 1px solid #3f6369;
  border-right: 1px solid #3f6369;
  display: flex;
  align-items: center;
}
.tool-end .handle { width: 16px; }

/* main */
.main { height: 618px; flex: none; display: flex; }
.sidetools {
  width: 60px;
  flex: none;
  padding: 0 0 0 1px;
  display: flex;
  flex-direction: column;
  border-top: 1px solid #3f6369;
  border-left: 1px solid #3f6369;
}
.grip-row { height: 10px; display: flex; justify-content: center; align-items: center; gap: 5px; margin-right: 4px; flex: none; }
.dot {
  display: block;
  width: 4px;
  height: 4px;
  border-radius: 50%;
  background: #3a5a60;
  box-shadow: 0 0 0 1px #6a949a;
}
.dot-s { width: 3px; height: 3px; background: #33515a; box-shadow: none; }
.sbtn {
  height: 25px;
  display: flex;
  align-items: center;
  justify-content: center;
  background: #4a747b;
  border: 2px solid #3d5e64;
  border-radius: 3px;
}
.sbtn svg { width: 21px; height: 21px; }
.sbtn-wide { height: 18px; width: 53px; flex: none; margin-left: 1px; }
.sbtn .back { width: 14px; height: 12px; }
.sgrid { display: grid; grid-template-columns: 26px 26px; column-gap: 2px; row-gap: 3px; margin-top: 3px; width: 54px; }
.sgrid-gap { margin-top: 9px; row-gap: 2px; }
.sgrid-gap-b { margin-top: 10px; }
.ik { fill: none; stroke: #000; stroke-width: 1.400; }
.ir { fill: none; stroke: #e00000; stroke-width: 1.400; }
.ib { fill: none; stroke: #0000e0; stroke-width: 2; }
.ib-dash { stroke-dasharray: 3 2; stroke-width: 1.400; }
.ib-thin { stroke-width: 1.600; stroke-dasharray: 2 1.500; }
.ik-dash { stroke-dasharray: 3 1; stroke-width: 1; }
.abc { font: bold 11px "DejaVu Sans Mono", monospace; fill: #000; text-anchor: middle; }

.center { width: 805px; flex: none; display: flex; flex-direction: column; padding-top: 2px; }
.canvas-row { display: flex; height: 599px; flex: none; }
.canvas { flex: none; width: 790px; height: 599px; }
.vscroll {
  width: 14px;
  flex: none;
  display: flex;
  flex-direction: column;
  background: #4c787f;
}
.vscroll-main { width: 15px; }
.sb-btn {
  height: 14px;
  flex: none;
  display: flex;
  align-items: center;
  justify-content: center;
  background: #4c787f;
  box-shadow: inset 0 0 0 1px #436a70;
}
.sb-space { flex: none; display: block; }
.sb-fill { flex: 1; }
.sb-s145 { height: 145px; }
.sb-thumb {
  flex: none;
  display: block;
  background: linear-gradient(90deg, #3f4c5c, #687685 55%, #4b5767);
}
.sb-t267 { height: 267px; }
.sb-t105 { height: 105px; }
.sb-t39 { height: 40px; }
.sb-t21 { height: 21px; }
.arr-up, .arr-down, .arr-left, .arr-right { display: block; width: 0; height: 0; }
.arr-up { border-left: 5px solid transparent; border-right: 5px solid transparent; border-bottom: 5px solid #fff; }
.arr-down { border-left: 5px solid transparent; border-right: 5px solid transparent; border-top: 5px solid #fff; }
.arr-left { border-top: 5px solid transparent; border-bottom: 5px solid transparent; border-right: 5px solid #fff; }
.arr-right { border-top: 5px solid transparent; border-bottom: 5px solid transparent; border-left: 5px solid #fff; }

.hscroll-row { display: flex; height: 17px; flex: none; }
.hscroll {
  width: 740px;
  height: 16px;
  flex: none;
  display: flex;
  border-bottom: 2px solid #000;
  box-shadow: 0 1px 0 #3f6369;
}
.hb-btn {
  width: 14px;
  flex: none;
  display: flex;
  align-items: center;
  justify-content: center;
  box-shadow: inset 0 0 0 1px #436a70;
}
.hb-space { width: 172px; flex: none; }
.hb-thumb { width: 376px; flex: none; margin-top: 2px; background: linear-gradient(#3f4c5c, #687685 55%, #4b5767); }
.hb-fill { flex: 1; }
.zoombox {
  width: 65px;
  flex: none;
  font-size: 12.500px;
  text-align: right;
  line-height: 16px;
  padding-right: 1px;
  border-right: 1px solid #3f6369;
  border-bottom: 1px solid #3f6369;
}

/* gutter between the drawing and the docks */
.gutter { width: 5px; flex: none; display: flex; flex-direction: column; padding: 104px 0 0 1px; }
.gut-b { margin-top: 234px; }
.gut-c { margin-top: 199px; }

/* dock */
.dock { width: 205px; flex: none; display: flex; flex-direction: column; padding-top: 3px; }
.dock-title { display: flex; height: 15px; flex: none; align-items: center; }
.dt-text {
  width: 190px;
  height: 15px;
  line-height: 14px;
  font-size: 11.300px;
  letter-spacing: 0.300px;
  text-align: center;
  background: #556476;
  border-top: 1px solid #2c3d44;
  border-left: 1px solid #2c3d44;
  border-right: 1px solid #6d9aa0;
  border-bottom: 1px solid #6d9aa0;
  color: #eef1f1;
}
.dt-close { width: 11px; height: 11px; margin-left: 2px; display: block; background: #3e6167; border-radius: 3px; }
.btn-row { display: flex; gap: 2px; padding-left: 1px; margin-top: 3px; height: 22px; flex: none; }
.btn-row-block { height: 23px; margin-top: 4px; }
.btn-row-two { margin-top: 2px; height: 24px; }
.dbtn {
  width: 39.500px;
  display: flex;
  align-items: center;
  justify-content: center;
  background: #4a747b;
  border: 2px solid #3d5e64;
  border-radius: 3px;
  flex: none;
}
.btn-row-two .dbtn { width: 101px; }
.btn-row-two .dbtn + .dbtn { width: 99px; }
.dbtn-plus { color: #0000e6; font-weight: bold; font-size: 17px; line-height: 17px; }
.ic16 { width: 16px; height: 14px; }
.ic18 { width: 16px; height: 18px; }
.ab { font: 11px "DejaVu Sans", sans-serif; fill: #000; text-anchor: middle; }

.listbox {
  display: flex;
  background: #394b4d;
  margin-top: 3px;
  flex: none;
}
.listbox-layer { height: 160px; }
.listbox-block { height: 61px; margin-top: 2px; }
.rows { flex: 1; min-width: 0; overflow: hidden; }
.row {
  height: 20px;
  display: flex;
  align-items: center;
  padding-left: 3px;
  font-size: 13px;
  white-space: nowrap;
}
.row-sel { background: #55687a; }
.eye { width: 16px; height: 13px; flex: none; }
.lock { width: 9px; height: 12px; margin-left: 4px; margin-right: 4px; flex: none; }
.row-b .eye { margin-right: 1px; }
.listbox .vscroll { width: 13px; }

.dock-gap { height: 8px; flex: none; display: flex; justify-content: center; align-items: center; }
.dock-gap-b { height: 10px; }

.tree { margin: 4px 3px 0 3px; flex: none; height: 100px; display: flex; flex-direction: column; }
.tree-head {
  height: 24px;
  flex: none;
  line-height: 24px;
  padding-left: 4px;
  font-size: 13px;
  background: linear-gradient(100deg, #4f6f78 0, #456b72 50%, #4f7f86 100%);
  border: 1px solid #3d5e64;
  color: #eef1f1;
}
.tree-body { flex: 1; background: #394b4d; border-bottom: 1px solid #3d5e64; }
.tree-row {
  height: 20px;
  display: flex;
  align-items: center;
  margin-left: 14px;
  font-size: 13px;
  position: relative;
}
.tree-row::before {
  content: "";
  position: absolute;
  left: -7px;
  top: 0;
  width: 7px;
  height: 10px;
  border-left: 1px dotted #63797c;
  border-bottom: 1px dotted #63797c;
}
.tree-sel {
  background: #55687a;
  outline: 1px dotted #d8c0b0;
  outline-offset: -1px;
}
.book { width: 15px; height: 14px; margin-left: 1px; margin-right: 3px; flex: none; }

.preview { display: flex; height: 99px; flex: none; margin: 4px 3px 0 3px; background: #394b4d; overflow: hidden; }
.thumbs { flex: 1; display: grid; grid-template-columns: 64px 64px; grid-auto-rows: min-content; column-gap: 4px; padding: 2px 0 0 3px; align-content: start; }
.thumb { text-align: center; }
.thumb-img { width: 64px; height: 64px; background: #fff; }
.thumb figcaption { height: 22px; line-height: 24px; font-size: 13px; }
.thumb-cut { width: 64px; height: 11px; background: #fff; }
.thumb-cut svg { width: 64px; height: 11px; }

.insert {
  height: 28px;
  flex: none;
  margin: 4px 3px 0 4px;
  line-height: 24px;
  text-align: center;
  font-size: 13px;
  background: #4a747b;
  border: 2px solid #3d5e64;
  border-radius: 3px;
}

.split-row { height: 6px; flex: none; display: flex; justify-content: center; align-items: center; }

/* command */
.command { height: 45px; flex: none; display: flex; }
.cmd-side { width: 19px; flex: none; display: flex; flex-direction: column; padding-left: 1px; }
.cmd-close { width: 13px; height: 12px; margin-left: 3px; margin-top: 1px; display: block; background: #3e6167; border-radius: 3px; }
.cmd-tab {
  margin-top: 2px;
  width: 17px;
  height: 30px;
  background: #55687a;
  border: 1px solid #3a5a60;
  display: flex;
  align-items: center;
  justify-content: center;
  font-size: 10.500px;
  color: #fff;
}
.cmd-tab span { writing-mode: vertical-rl; transform: rotate(180deg); line-height: 15px; }
.cmd-main { flex: 1; display: flex; flex-direction: column; }
.cmd-output { height: 24px; flex: none; background: #394b4d; border-bottom: 1px solid #000; box-shadow: 0 1px 0 #6d9aa0; }
.cmd-input { height: 19px; margin-top: 2px; flex: none; display: flex; align-items: center; }
.cmd-label { width: 63px; flex: none; color: #16262a; font-size: 13px; padding-left: 1px; }
.cmd-field { flex: 1; align-self: stretch; background: #394b4d; }

/* status */
.status { flex: 1; display: flex; position: relative; padding-top: 5px; font-size: 7.800px; color: #dce6e6; }
.st-coord { width: 192px; flex: none; line-height: 14px; padding-left: 3px; }
.st-coord-2 { width: 334px; border-left: 1px solid #2c3d44; padding-left: 2px; }
.st-mouse { width: 165px; flex: none; padding-left: 3px; margin-top: -1px; }
.st-sel { flex: 1; line-height: 14px; }
.grip { position: absolute; right: 0; bottom: 0; width: 14px; height: 14px; }

/* drawing */
.bg-black { fill: #000; }
.griddot { fill: #9a9a9a; }
.meta { fill: none; stroke: #5a5a5a; stroke-dasharray: 5 3; }
.red-zero { stroke: #e00000; stroke-width: 1; fill: none; }
.blue { fill: none; stroke: #0000ff; stroke-width: 1; }
.blue .blue-fill { fill: #0000ff; stroke: none; }
.blue-num text { font: 8px "DejaVu Sans", sans-serif; fill: #0000ff; text-anchor: middle; }
.white { fill: none; stroke: #fff; stroke-width: 1; shape-rendering: crispEdges; }
.red { fill: none; stroke: #a00000; stroke-dasharray: 12 3 3 3; shape-rendering: crispEdges; }
.yellow { fill: none; stroke: #ffff00; stroke-width: 1; shape-rendering: crispEdges; }
.cyan text { font: 6.500px "DejaVu Sans", sans-serif; fill: #00ffff; stroke: #00ffff; stroke-width: 0.150px; }
.cyan .cy-big { font-size: 9px; stroke: none; }
.cyan .cy-huge { font: 200 19px "Inter", "DejaVu Sans", sans-serif; stroke: none; }
```
